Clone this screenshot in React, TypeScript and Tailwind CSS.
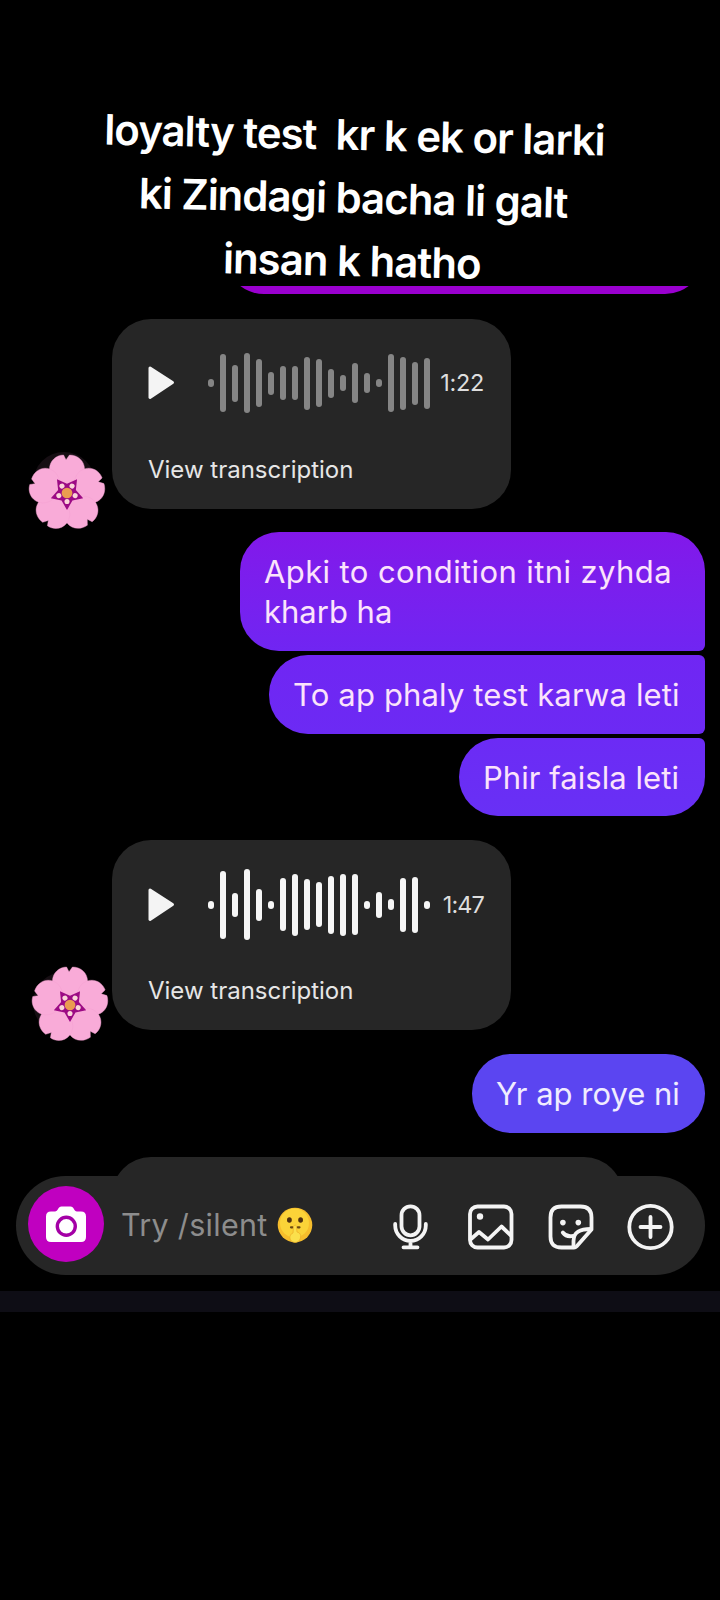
import type { ReactNode } from "react";

function Flower({ className = "" }: { className?: string }) {
  const petals = [0, 72, 144, 216, 288];
  return (
    <svg viewBox="-40 -40 80 80" className={className}>
      {petals.map((a) => (
        <path
          key={a}
          transform={`rotate(${a})`}
          d="M0 -6 C-7 -9 -18 -14 -18 -24.5 C-18 -33 -11 -39 -3.5 -39 L-1 -34 L2.5 -39 C11 -39 18 -33 18 -24.5 C18 -14 7 -9 0 -6 Z"
          fill="#f9abd8"
          stroke="#f39fd0"
          strokeWidth="0.4"
        />
      ))}
      <path d="M0 17.5 L-5.6 7.8 L-16.6 5.4 L-9.1 -3 L-10.3 -14.2 L0 -9.6 L10.3 -14.2 L9.1 -3 L16.6 5.4 L5.6 7.8 Z" fill="#9c0a84" />
      {petals.map((a) => (
        <circle key={a} transform={`rotate(${a})`} cx="0" cy="8.8" r="2.6" fill="#fbd5d8" />
      ))}
      <circle r="5.5" fill="#ea9c50" />
    </svg>
  );
}

function Avatar({ className = "", discTop }: { className?: string; discTop: string }) {
  return (
    <div className={`relative h-[78px] w-[78px] shrink-0 ${className}`}>
      <div className={`absolute h-[62px] w-[62px] rounded-full bg-[#160e13] ${discTop}`} />
      <Flower className="relative h-[78px] w-[78px]" />
    </div>
  );
}

function Voice({ bars, time, barClass, timeClass }: { bars: number[]; time: string; barClass: string; timeClass: string }) {
  return (
    <div className="h-[190px] w-[399px] shrink-0 rounded-[39px] bg-[#262626] pr-[27px] pl-[36px]">
      <div className="flex h-[129px] items-center">
        <svg viewBox="0 0 27 34" className="h-[34px] w-[27px] shrink-0">
          <path d="M2 2 L24.5 16.5 L2 31.5 Z" fill="#f4f4f4" stroke="#f4f4f4" strokeWidth="3" strokeLinejoin="round" />
        </svg>
        <div className="ml-[33px] flex items-center gap-[6px]">
          {bars.map((h, i) => (
            <div key={i} className={`w-[6px] rounded-full ${barClass}`} style={{ height: h }} />
          ))}
        </div>
        <span className={`ml-auto text-[23.5px] leading-none text-[#dedede] ${timeClass}`}>{time}</span>
      </div>
      <div className="mt-[7px] text-[24px] leading-[30px] whitespace-nowrap text-[#e6e6e6]">View transcription</div>
    </div>
  );
}

function Bubble({ children, className }: { children: ReactNode; className: string }) {
  return (
    <div className={`self-end rounded-[39px] pt-[20px] pl-[24px] text-[31px] leading-[40px] whitespace-nowrap ${className}`}>
      {children}
    </div>
  );
}

function CameraIcon() {
  return (
    <svg viewBox="0 0 40 36" className="h-[36px] w-[40px]">
      <path d="M5 5.5 H9 C12 5.5 12 0.5 15.5 0.5 H24.5 C28 0.5 28 5.5 31 5.5 H35 Q40 5.5 40 10.5 V31 Q40 36 35 36 H5 Q0 36 0 31 V10.5 Q0 5.5 5 5.5 Z" fill="#fff" />
      <circle cx="20.3" cy="20.3" r="9" fill="#fff" stroke="#a400a6" strokeWidth="3.4" />
    </svg>
  );
}

function Shush() {
  return (
    <svg viewBox="0 0 36 36" className="ml-[9px] h-[36px] w-[36px] shrink-0">
      <circle cx="18" cy="18" r="17.3" fill="#f6bd2c" />
      <circle cx="17.5" cy="16" r="14.5" fill="#fbd338" />
      <ellipse cx="12.4" cy="13" rx="2.4" ry="2.7" fill="#4f3010" />
      <ellipse cx="23.6" cy="13" rx="2.4" ry="2.7" fill="#4f3010" />
      <path d="M14 20.3 H15.5 M20.8 20.3 H22.5" stroke="#6b4a12" strokeWidth="2.2" fill="none" strokeLinecap="round" />
      <path d="M16.6 19 Q18.2 17 19.4 19 L20 25 Q24.5 26 23.5 31 Q22 35.5 18 35.5 Q13 35 12.8 30 Q13 27 16 26 Z" fill="#fbe04c" stroke="#ecae28" strokeWidth="0.7" />
    </svg>
  );
}

const stroke = { fill: "none", stroke: "#f4f4f4", strokeWidth: 3.8, strokeLinecap: "round", strokeLinejoin: "round" } as const;

function Mic() {
  return (
    <svg viewBox="0 0 36 46" className="h-[46px] w-[36px]">
      <g {...stroke}>
        <rect x="8.5" y="2.3" width="18" height="29" rx="9" />
        <path d="M2.2 20 V21.5 A15.3 15.3 0 0 0 32.8 21.5 V20 M17.5 38 V43 M10.5 43.3 H24.5" />
      </g>
    </svg>
  );
}

function Picture() {
  return (
    <svg viewBox="0 0 46 46" className="h-[46px] w-[46px]">
      <g {...stroke}>
        <rect x="2" y="2.5" width="41.5" height="41" rx="7.5" />
        <path d="M3 35 L11 28 L20 35.5 L33.5 22.5 L43 31.5" />
      </g>
      <circle cx="12" cy="12.5" r="3.2" fill="#f4f4f4" />
    </svg>
  );
}

function Sticker() {
  return (
    <svg viewBox="0 0 46 46" className="h-[46px] w-[46px]">
      <g {...stroke}>
        <path d="M26 43.5 H13.5 Q2.5 43.5 2.5 32.5 V13.5 Q2.5 2.5 13.5 2.5 H32.5 Q43.5 2.5 43.5 13.5 V25.5 L28.5 42.5 Q27.5 43.5 26 43.5 Z" />
        <path d="M25.5 43 V37 C25.5 28 32 25 43 25 M14.8 28.5 Q18.5 33.5 25.5 31.8" />
      </g>
      <circle cx="14.9" cy="18.6" r="2.8" fill="#f4f4f4" />
      <circle cx="30.3" cy="18.6" r="2.8" fill="#f4f4f4" />
    </svg>
  );
}

function Plus() {
  return (
    <svg viewBox="0 0 48 48" className="h-[48px] w-[48px]">
      <g {...stroke}>
        <circle cx="23.5" cy="24" r="21.2" />
        <path d="M23.5 14 V34 M13.5 24 H33.5" />
      </g>
    </svg>
  );
}

const firstBars = [8, 58, 37, 60, 48, 23, 34, 34, 53, 48, 29, 16, 40, 20, 8, 58, 53, 43, 51];
const secondBars = [8, 68, 24, 71, 32, 8, 53, 62, 51, 45, 58, 62, 61, 8, 26, 11, 54, 56, 8];

export default function App() {
  return (
    <div className="flex h-[1600px] w-[720px] flex-col overflow-hidden bg-black font-['Inter','Noto_Sans',sans-serif]">
      <div className="flex h-[286px] shrink-0 items-start justify-center pt-[102.5px] pr-[14px]">
        <div className="flex rotate-[1.26deg] flex-col items-center text-[42px] leading-[63px] font-semibold tracking-[-1px] whitespace-pre text-white">
          <span>{"loyalty test  kr k ek or larki"}</span>
          <span>ki Zindagi bacha li galt</span>
          <span>insan k hatho</span>
        </div>
      </div>

      <div className="mr-[16px] flex h-[8px] w-[479px] shrink-0 items-end self-end overflow-hidden">
        <div className="h-[78px] w-full shrink-0 rounded-[39px] bg-[#9a00cf]" />
      </div>

      <div className="mt-[24.5px] flex shrink-0 pl-[28px]">
        <Avatar className="mt-[135.5px] mr-[6px]" discTop="top-[-2px] left-[5px]" />
        <Voice bars={firstBars} time="1:22" barClass="bg-[#858585]" timeClass="tracking-[-0.3px]" />
      </div>

      <div className="flex shrink-0 flex-col gap-[4px] pr-[15.5px] text-[#fbe3fb]">
        <Bubble className="h-[119px] w-[464.5px] rounded-br-[6px] bg-linear-to-b from-[#8218ea] to-[#7025f2]">
          <p className="tracking-[0.4px]">Apki to condition itni zyhda</p>
          <p>kharb ha</p>
        </Bubble>
        <Bubble className="h-[79px] w-[435.5px] rounded-r-[6px] bg-linear-to-b from-[#7026f3] to-[#6c2af4]">
          <p className="tracking-[0.15px]">To ap phaly test karwa leti</p>
        </Bubble>
        <Bubble className="h-[78px] w-[245.5px] rounded-tr-[6px] bg-linear-to-b from-[#6c2bf5] to-[#6830f5]">
          <p className="tracking-[0.05px]">Phir faisla leti</p>
        </Bubble>
      </div>

      <div className="mt-[24px] flex shrink-0 pl-[31px]">
        <Avatar className="mt-[126px] mr-[3px]" discTop="top-[6px] left-[2px]" />
        <Voice bars={secondBars} time="1:47" barClass="bg-[#f6f6f6]" timeClass="tracking-[-0.9px]" />
      </div>

      <div className="mt-[10px] flex shrink-0 flex-col pr-[15.5px] text-[#f0ecff]">
        <Bubble className="h-[79px] w-[232.5px] bg-[#5b45f1]">
          <p>Yr ap roye ni</p>
        </Bubble>
      </div>

      <div className="mt-[24px] ml-[112px] h-[18.5px] w-[511px] shrink-0 overflow-hidden">
        <div className="h-[78px] rounded-[39px] bg-[#262626]" />
      </div>

      <div className="mr-[15.5px] ml-[16px] flex h-[99.5px] shrink-0 items-center rounded-full bg-[#262626] pr-[30px] pl-[12px]">
        <div className="mb-[3px] flex h-[76px] w-[76px] shrink-0 items-center justify-center rounded-full bg-[#c000c0]">
          <CameraIcon />
        </div>
        <span className="ml-[17px] text-[30.5px] leading-[36px] tracking-[0.3px] whitespace-nowrap text-[#8d8d8d]">Try /silent</span>
        <Shush />
        <div className="ml-auto flex items-center pt-[4px]">
          <Mic />
          <div className="ml-[39px]"><Picture /></div>
          <div className="ml-[34px]"><Sticker /></div>
          <div className="ml-[33px]"><Plus /></div>
        </div>
      </div>

      <div className="mt-[16px] h-[20.5px] w-full shrink-0 bg-[#0e0d15]" />
    </div>
  );
}
